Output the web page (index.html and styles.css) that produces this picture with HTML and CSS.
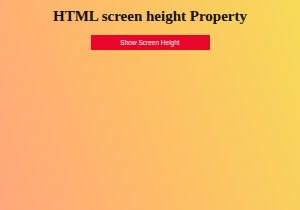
FILE: index.html
```html
<!DOCTYPE html>
<html>
<head>
<meta charset="utf-8">
<link rel="stylesheet" href="styles.css">
</head>
<body>
<div class="page">
  <h1 class="title">HTML screen height Property</h1>
  <button class="btn">Show Screen Height</button>
</div>
</body>
</html>
```
FILE: styles.css
```css
html, body {
  margin: 0;
  height: 100%;
}
body {
  background: linear-gradient(70deg, #ffa67b 0%, #fdbf66 50%, #f7db58 100%);
}
.page {
  display: flex;
  flex-direction: column;
  align-items: center;
  padding-top: 8px;
}
.title {
  margin: 0;
  font-family: "Liberation Serif", serif;
  font-weight: bold;
  font-size: 15px;
  line-height: 17px;
  color: #111;
}
.btn {
  margin-top: 10px;
  width: 119px;
  height: 15px;
  padding: 0;
  border: none;
  background: #e8062b;
  color: #fff;
  font-family: "Liberation Sans", sans-serif;
  font-size: 6.5px;
}
```
